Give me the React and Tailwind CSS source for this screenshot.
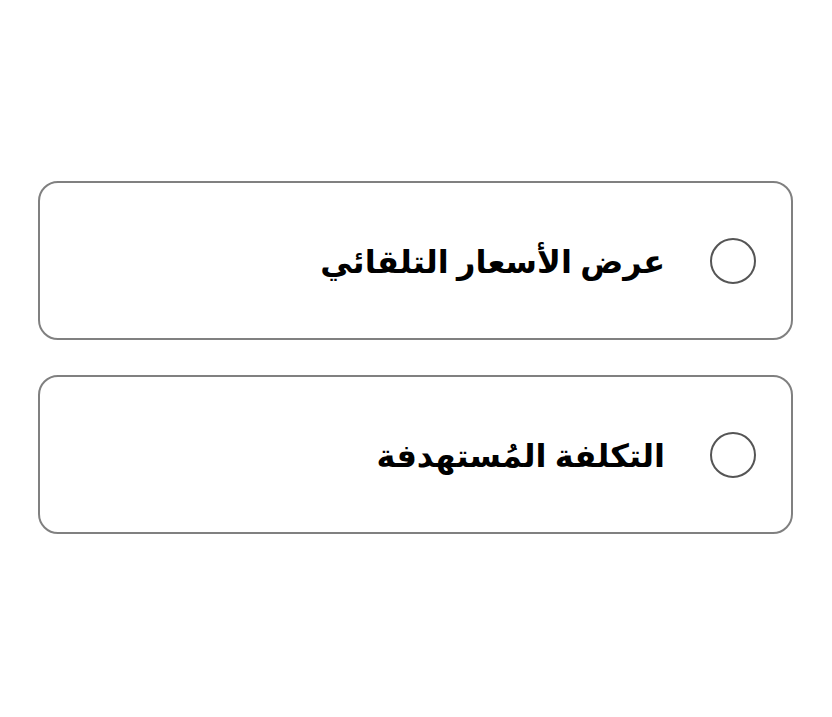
const OPTIONS = [
  { id: "auto", label: "عرض الأسعار التلقائي" },
  { id: "target", label: "التكلفة المُستهدفة" },
];

export default function App() {
  return (
    <div dir="rtl" className="w-[832px] h-[717px] bg-white pr-[39px] pl-[38px] pt-[181px] flex flex-col gap-[35px] font-['Noto_Sans','DejaVu_Sans',sans-serif]">
      {OPTIONS.map((o) => (
        <label
          key={o.id}
          className="h-[159px] rounded-[20px] border-2 border-[#808080] flex items-center pr-[35px] gap-[45px] cursor-pointer"
        >
          <span className="w-[46px] h-[46px] rounded-full border-2 border-[#555555] shrink-0" />
          <span className="text-[32px] font-bold text-black leading-none">{o.label}</span>
        </label>
      ))}
    </div>
  );
}
